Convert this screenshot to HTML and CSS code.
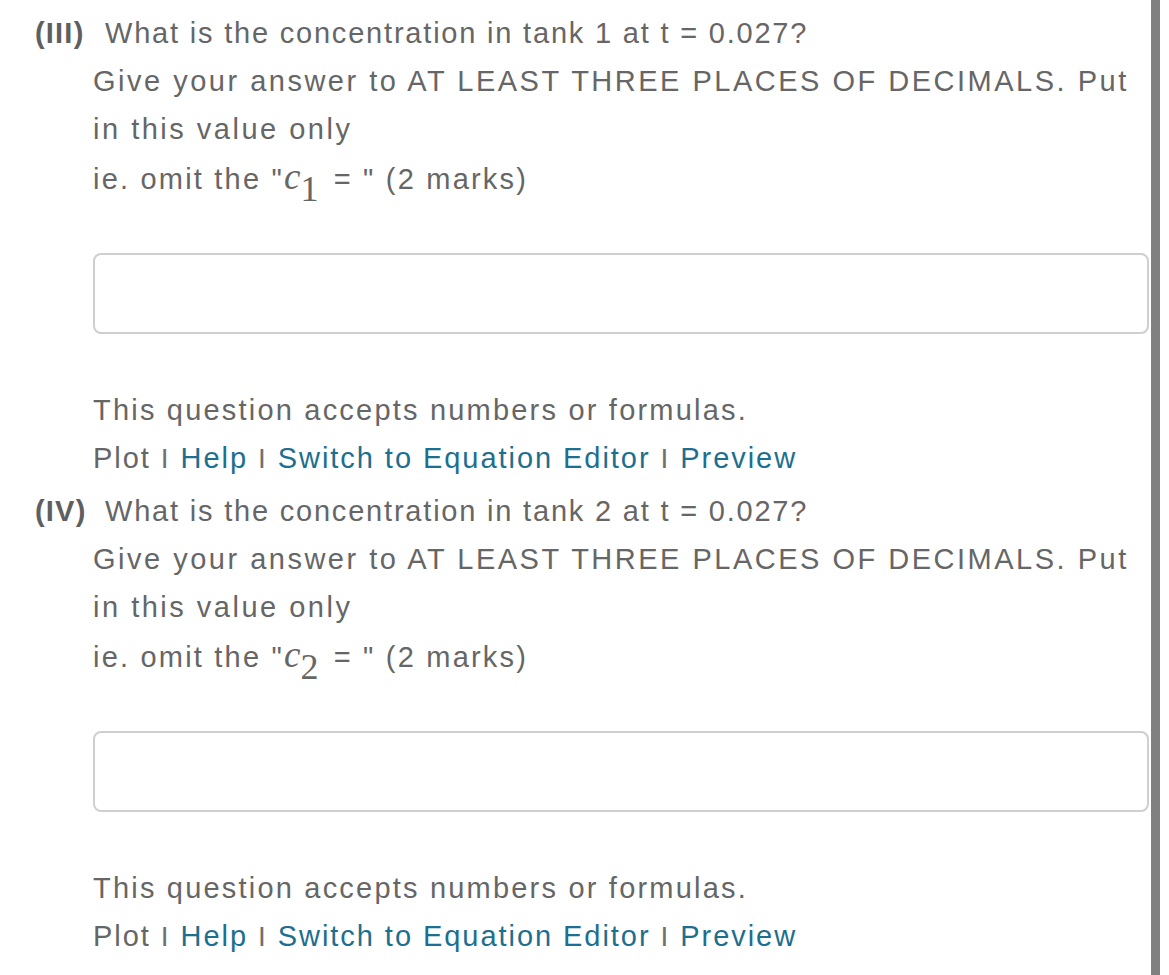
FILE: index.html
```html
<!DOCTYPE html>
<html>
<head>
<meta charset="utf-8">
<link rel="stylesheet" href="styles.css">
</head>
<body>
<div class="page">
  <div class="content">
    <section class="question">
      <div class="qhead"><span class="num">(III)</span>What is the concentration in tank 1 at t = 0.027?</div>
      <div class="qbody">
        <p class="line instr">Give your answer to AT LEAST THREE PLACES OF DECIMALS. Put in this value only</p>
        <p class="line">ie. omit the "<span class="math"><i>c</i><sub>1</sub></span> = " (2 marks)</p>
        <div class="answer"></div>
        <p class="line note">This question accepts numbers or formulas.</p>
        <p class="line links">Plot <span class="sep">I</span> <a>Help</a> <span class="sep">I</span> <a>Switch to Equation Editor</a> <span class="sep">I</span> <a>Preview</a></p>
      </div>
    </section>
    <section class="question">
      <div class="qhead"><span class="num">(IV)</span>What is the concentration in tank 2 at t = 0.027?</div>
      <div class="qbody">
        <p class="line instr">Give your answer to AT LEAST THREE PLACES OF DECIMALS. Put in this value only</p>
        <p class="line">ie. omit the "<span class="math"><i>c</i><sub>2</sub></span> = " (2 marks)</p>
        <div class="answer"></div>
        <p class="line note">This question accepts numbers or formulas.</p>
        <p class="line links">Plot <span class="sep">I</span> <a>Help</a> <span class="sep">I</span> <a>Switch to Equation Editor</a> <span class="sep">I</span> <a>Preview</a></p>
      </div>
    </section>
  </div>
  <div class="scrollbar"></div>
</div>
</body>
</html>
```

FILE: styles.css
```css
html, body {
  margin: 0;
  padding: 0;
  background: #fff;
}
body {
  font-family: "Liberation Sans", Arial, sans-serif;
  color: #666;
  font-size: 29px;
  line-height: 48px;
  letter-spacing: 2.2px;
}
.page {
  display: flex;
  width: 1169px;
  height: 975px;
  overflow: hidden;
}
.content {
  width: 1149px;
  flex: none;
  padding-top: 9px;
  padding-left: 35px;
  box-sizing: border-box;
}
.scrollbar {
  width: 9px;
  flex: none;
  margin-left: 2px;
  background: #808080;
  height: 975px;
}
.question {
  margin-bottom: 4px;
}
.qhead {
  letter-spacing: 1.8px;
}
.qhead .num {
  display: inline-block;
  width: 70px;
  font-weight: bold;
  letter-spacing: 1.2px;
  color: #5f5f5f;
}
.qbody {
  padding-left: 58px;
}
.line {
  margin: 0;
}
.instr {
  letter-spacing: 2.5px;
}
.math {
  font-family: "Liberation Serif", serif;
  font-size: 37px;
  letter-spacing: 0;
  margin-right: 5px;
}
.math i {
  font-style: italic;
}
.math sub {
  font-size: 36px;
  vertical-align: -12px;
  line-height: 0;
}
.answer {
  height: 77px;
  border: 2px solid #cfcfcf;
  border-radius: 8px;
  margin-top: 50px;
  margin-bottom: 52px;
}
.links {
  letter-spacing: 1.95px;
}
.sep {
  font-size: 28px;
  color: #707070;
}
a {
  color: #1d6f8f;
}
```
